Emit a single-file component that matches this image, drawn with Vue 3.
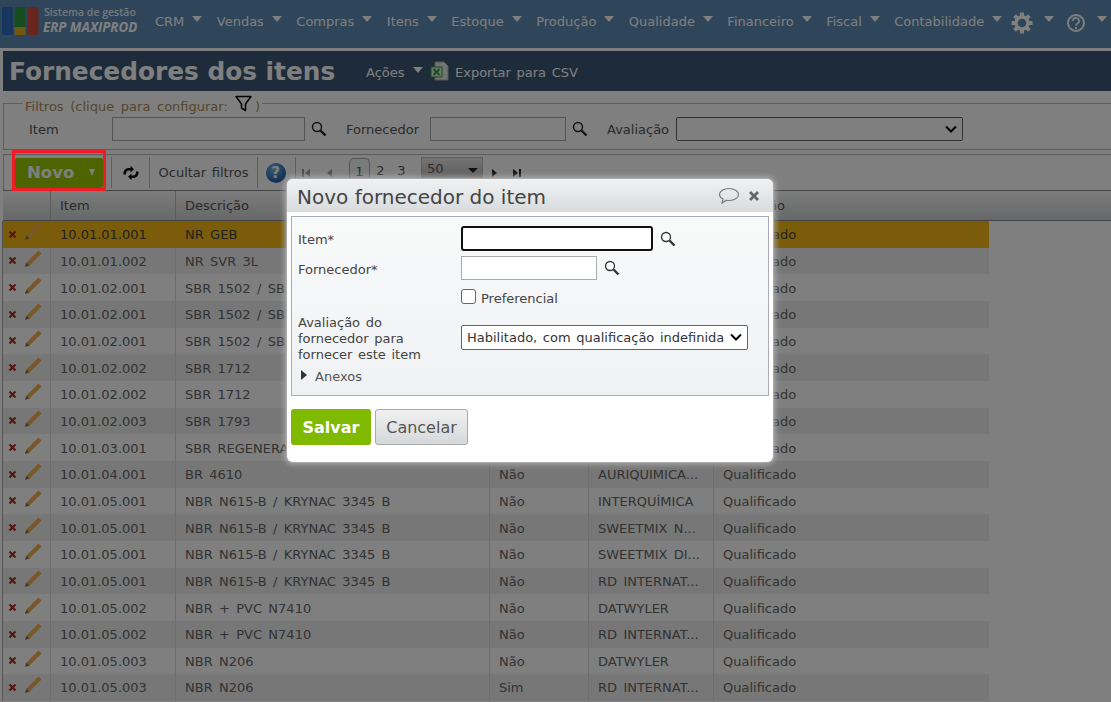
<script setup>
const navItems = ['CRM', 'Vendas', 'Compras', 'Itens', 'Estoque', 'Produção', 'Qualidade', 'Financeiro', 'Fiscal', 'Contabilidade']
const gearAngles = [0, 45, 90, 135, 180, 225, 270, 315]
const rows = [
  ['10.01.01.001', 'NR GEB', 'Não', 'AURIQUIMICA...'],
  ['10.01.01.002', 'NR SVR 3L', 'Não', 'AURIQUIMICA...'],
  ['10.01.02.001', 'SBR 1502 / SBR 1712', 'Não', 'DATWYLER'],
  ['10.01.02.001', 'SBR 1502 / SBR 1712', 'Não', 'INTERQUÍMICA'],
  ['10.01.02.001', 'SBR 1502 / SBR 1712', 'Não', 'RD INTERNAT...'],
  ['10.01.02.002', 'SBR 1712', 'Não', 'DATWYLER'],
  ['10.01.02.002', 'SBR 1712', 'Não', 'RD INTERNAT...'],
  ['10.01.02.003', 'SBR 1793', 'Não', 'DATWYLER'],
  ['10.01.03.001', 'SBR REGENERADO', 'Não', 'DATWYLER'],
  ['10.01.04.001', 'BR 4610', 'Não', 'AURIQUIMICA...'],
  ['10.01.05.001', 'NBR N615-B / KRYNAC 3345 B', 'Não', 'INTERQUÍMICA'],
  ['10.01.05.001', 'NBR N615-B / KRYNAC 3345 B', 'Não', 'SWEETMIX N...'],
  ['10.01.05.001', 'NBR N615-B / KRYNAC 3345 B', 'Não', 'SWEETMIX DI...'],
  ['10.01.05.001', 'NBR N615-B / KRYNAC 3345 B', 'Não', 'RD INTERNAT...'],
  ['10.01.05.002', 'NBR + PVC N7410', 'Não', 'DATWYLER'],
  ['10.01.05.002', 'NBR + PVC N7410', 'Não', 'RD INTERNAT...'],
  ['10.01.05.003', 'NBR N206', 'Não', 'DATWYLER'],
  ['10.01.05.003', 'NBR N206', 'Sim', 'RD INTERNAT...'],
]
</script>

<template>
  <div class="page">
    <header class="nav">
      <div class="logo">
        <svg width="37" height="28" viewBox="0 0 37 28">
          <rect x="0" y="0" width="11" height="28" rx="2" fill="#2f6cc0" />
          <rect x="12.500" y="0" width="11" height="20" rx="1" fill="#2f9a3c" />
          <rect x="12.500" y="20" width="11" height="8" rx="1" fill="#e0b020" />
          <rect x="25.500" y="0" width="11" height="28" rx="2" fill="#d04c3c" />
        </svg>
        <div class="logo-text">
          <span class="logo-top">Sistema de gestão</span>
          <span class="logo-bottom">ERP MAXIPROD</span>
        </div>
      </div>
      <nav class="menu">
        <span v-for="item in navItems" :key="item" class="menu-item">{{ item }}<i class="caret"></i></span>
        <span class="menu-icon">
          <svg width="22" height="22" viewBox="-11 -11 22 22">
            <circle r="6" fill="none" stroke="#fff" stroke-width="3.400" />
            <rect v-for="a in gearAngles" :key="a" x="-2" y="-10.500" width="4" height="5" fill="#fff" :transform="`rotate(${a})`" />
          </svg>
          <i class="caret"></i>
        </span>
        <span class="menu-icon">
          <svg width="20" height="20" viewBox="0 0 20 20">
            <circle cx="10" cy="10" r="8" fill="none" stroke="#fff" stroke-width="2" />
            <path d="M7 8a3 3 0 1 1 4.600 2.400c-1 .7-1.600 1.200-1.600 2.400" fill="none" stroke="#fff" stroke-width="1.800" />
            <rect x="9" y="14" width="2" height="2" fill="#fff" />
          </svg>
          <i class="caret"></i>
        </span>
      </nav>
    </header>

    <main class="content">
      <div class="title-bar">
        <h1>Fornecedores dos itens</h1>
        <span class="title-action first">Ações<i class="caret"></i></span>
        <svg class="xls" width="20" height="20" viewBox="0 0 20 20">
          <path d="M5 1h9l4 4v14H5z" fill="#e8e8e8" stroke="#aaa" />
          <rect x="1" y="6" width="11" height="10" fill="#dcebd8" stroke="#2f9a3c" />
          <path d="M3.500 8l6 6M9.500 8l-6 6" stroke="#2f9a3c" stroke-width="1.800" />
        </svg>
        <span class="title-action">Exportar para CSV</span>
      </div>

      <fieldset class="filters">
        <legend>Filtros (clique para configurar:
          <svg class="funnel" width="17" height="17" viewBox="0 0 17 17">
            <path d="M1 1.500h15L10.500 9v6.500l-4-2.500V9z" fill="none" stroke="#000" stroke-width="1.500" stroke-linejoin="round" />
          </svg>
          )</legend>
        <div class="filter-row">
          <label class="f-item">Item</label>
          <input class="f-input wide" type="text" />
          <svg class="lens" width="16" height="16" viewBox="0 0 16 16">
            <circle cx="6" cy="6" r="4.500" fill="#fff" fill-opacity=".4" stroke="#222" stroke-width="1.400" />
            <path d="M9.500 9.500l5 5" stroke="#222" stroke-width="2.400" />
          </svg>
          <label class="f-forn">Fornecedor</label>
          <input class="f-input narrow" type="text" />
          <svg class="lens" width="16" height="16" viewBox="0 0 16 16">
            <circle cx="6" cy="6" r="4.500" fill="#fff" fill-opacity=".4" stroke="#222" stroke-width="1.400" />
            <path d="M9.500 9.500l5 5" stroke="#222" stroke-width="2.400" />
          </svg>
          <label class="f-aval">Avaliação</label>
          <select class="f-select"><option></option></select>
        </div>
      </fieldset>

      <div class="toolbar">
        <div class="novo-wrap">
          <button class="novo"><span>Novo</span><i class="novo-caret"></i></button>
        </div>
        <div class="tool refresh">
          <svg width="18" height="16" viewBox="0 0 18 16">
            <path d="M1.500 9.500C1 5.500 3.500 3 7 3h1.500V.8L12 4.200 8.500 7.500V5.500H7C5 5.500 3.800 7 4 9.500z" fill="#111" />
            <path d="M16.500 6.500C17 10.500 14.500 13 11 13H9.500v2.200L6 11.800 9.500 8.500v2H11c2 0 3.200-1.500 3-4z" fill="#111" />
          </svg>
        </div>
        <div class="tool hide-filters">Ocultar filtros</div>
        <div class="tool help">
          <span class="help-ball">?</span>
        </div>
        <div class="pager">
          <svg width="10" height="10" viewBox="0 0 10 10"><path d="M1 1h2v8H1zM9 1v8L4 5z" fill="#999" /></svg>
          <svg class="prev" width="10" height="10" viewBox="0 0 10 10"><path d="M8 1v8L3 5z" fill="#999" /></svg>
          <span class="page-no current">1</span>
          <span class="page-no">2</span>
          <span class="page-no">3</span>
          <span class="per-page">50<i class="per-caret"></i></span>
          <svg class="next" width="10" height="10" viewBox="0 0 10 10"><path d="M2 1v8l5-4z" fill="#222" /></svg>
          <svg class="last" width="10" height="10" viewBox="0 0 10 10"><path d="M1 1v8l5-4zM7 1h2v8H7z" fill="#222" /></svg>
        </div>
      </div>

      <div class="grid-head">
        <div class="hcell"></div>
        <div class="hcell">Item</div>
        <div class="hcell">Descrição</div>
        <div class="hcell">Preferencial</div>
        <div class="hcell">Fornecedor</div>
        <div class="hcell last-col">Avaliação</div>
      </div>
      <div class="grid-body">
        <div v-for="(r, i) in rows" :key="i" class="row" :class="{ sel: i === 0, alt: i % 2 === 1 }">
          <div class="cell actions">
            <svg width="9" height="9" viewBox="0 0 9 9"><path d="M1.500 1.500l6 6M7.500 1.500l-6 6" stroke="#a6321c" stroke-width="2.200" /></svg>
            <svg class="pencil" width="20" height="20" viewBox="0 0 20 20">
              <path d="M15.500 1.500l3 3L6.500 16.500l-3-3z" fill="#f0b050" />
              <path d="M3.500 13.500l3 3-4.500 1.500z" fill="#8a6a40" />
            </svg>
          </div>
          <div class="cell">{{ r[0] }}</div>
          <div class="cell">{{ r[1] }}</div>
          <div class="cell">{{ r[2] }}</div>
          <div class="cell">{{ r[3] }}</div>
          <div class="cell last-col">Qualificado</div>
        </div>
      </div>
    </main>

    <div class="overlay"></div>

    <section class="modal">
      <div class="modal-head">
        <h2>Novo fornecedor do item</h2>
        <svg class="comment" width="22" height="18" viewBox="0 0 22 18">
          <path d="M11 1.500c5 0 9.500 2.500 9.500 6s-4.500 6-9 6c-1 0-2 0-3-.3L4 16l1-4C2.800 11 1.500 9.500 1.500 7.500c0-3.500 4.500-6 9.500-6z" fill="none" stroke="#777" stroke-width="1.100" />
        </svg>
        <svg class="close" width="12" height="12" viewBox="0 0 12 12"><path d="M2 2l8 8M10 2l-8 8" stroke="#666" stroke-width="2.800" /></svg>
      </div>
      <div class="modal-panel">
        <div class="form-row r1">
          <label>Item*</label>
          <input class="m-input focus" type="text" />
          <svg class="lens" width="16" height="16" viewBox="0 0 16 16">
            <circle cx="6" cy="6" r="4.500" fill="#fff" stroke="#333" stroke-width="1.300" />
            <path d="M9.500 9.500l5 5" stroke="#333" stroke-width="2.400" />
          </svg>
        </div>
        <div class="form-row r2">
          <label>Fornecedor*</label>
          <input class="m-input plain" type="text" />
          <svg class="lens" width="16" height="16" viewBox="0 0 16 16">
            <circle cx="6" cy="6" r="4.500" fill="#fff" stroke="#333" stroke-width="1.300" />
            <path d="M9.500 9.500l5 5" stroke="#333" stroke-width="2.400" />
          </svg>
        </div>
        <div class="form-row r3">
          <label></label>
          <span class="check"></span>
          <span class="check-label">Preferencial</span>
        </div>
        <div class="form-row r4">
          <label>Avaliação do fornecedor para fornecer este item</label>
          <select class="m-select"><option>Habilitado, com qualificação indefinida</option></select>
        </div>
        <div class="anexos"><i class="tri"></i>Anexos</div>
      </div>
      <div class="modal-actions">
        <button class="salvar">Salvar</button>
        <button class="cancelar">Cancelar</button>
      </div>
    </section>
  </div>
</template>

<style>
html, body { margin: 0; padding: 0; height: 100%; overflow: hidden; background: #fff; }
</style>

<style scoped>
.page {
  position: relative;
  width: 1111px;
  height: 702px;
  overflow: hidden;
  background: #fff;
  font-family: "DejaVu Sans", Verdana, sans-serif;
  font-size: 13px;
  word-spacing: 1.500px;
  color: #666;
}
.nav {
  display: flex;
  align-items: center;
  height: 48px;
  background: #5e8ab2;
  color: #fff;
}
.logo { flex: none; display: flex; align-items: center; width: 155px; padding-left: 2px; box-sizing: border-box; }
.logo svg { flex: none; margin-top: -7px; }
.logo-text { display: flex; flex-direction: column; margin-left: 5px; margin-top: -9px; font-family: "Open Sans", sans-serif; word-spacing: 0; }
.logo-top { font-size: 10.500px; font-weight: 600; line-height: 14px; color: #e8eef3; white-space: nowrap; }
.logo-bottom { font-size: 13.300px; font-weight: 700; font-style: italic; line-height: 16px; color: #fff; white-space: nowrap; margin-left: -1px; }
.menu { flex: none; display: flex; align-items: center; margin-top: -6px; }
.menu-item { display: flex; align-items: center; margin-right: 14.450px; white-space: nowrap; }
.caret {
  display: inline-block;
  width: 0;
  height: 0;
  margin-left: 8px;
  margin-top: -5px;
  border-left: 5px solid transparent;
  border-right: 5px solid transparent;
  border-top: 6px solid currentColor;
}
.menu-icon { display: flex; align-items: center; margin-right: 12px; margin-top: 3px; }
.menu-item:nth-child(10) { margin-right: 9px; }
.menu-icon .caret { margin-left: 11px; margin-top: -8px; }

.content { padding: 3px 0 0 3px; }
.title-bar {
  display: flex;
  align-items: center;
  height: 40px;
  padding-left: 6px;
  background: #3a5676;
  color: #fff;
}
.title-bar h1 { margin: 0; width: 357px; font-size: 24.800px; font-weight: 700; white-space: nowrap; word-spacing: 0; }
.title-action { display: inline-flex; align-items: center; margin-top: 2px; }
.title-action.first { width: 64px; }
.xls { flex: none; margin-right: 5px; margin-top: -1px; }

.filters {
  margin: 4px 0 0;
  padding: 0 0 8px 25px;
  height: 55px;
  box-sizing: border-box;
  border: 1px solid #bbb;
  border-right: 0;
  min-width: 0;
}
.filters legend {
  margin-left: -6px;
  padding: 0 2px;
  color: #a88d60;
  height: 16px;
  line-height: 16px;
  white-space: nowrap;
  word-spacing: 2.500px;
}
.funnel { vertical-align: -1px; margin: 0 -4px 0 1px; }
.filter-row { display: flex; align-items: center; height: 24px; margin-top: 6px; }
.filter-row label { color: #555; }
.f-item { width: 83px; }
.f-input { box-sizing: border-box; height: 24px; border: 1px solid #aaa; background: #fff; padding: 0; }
.wide { width: 193px; }
.narrow { width: 136px; }
.filter-row .lens { flex: none; margin-left: 6px; }
.f-forn { width: 84px; margin-left: 19px; }
.f-aval { width: 69px; margin-left: 19px; }
.f-select,
.m-select {
  appearance: none;
  background: #fff url("data:image/svg+xml,%3Csvg xmlns='http://www.w3.org/2000/svg' width='12' height='8' viewBox='0 0 12 8'%3E%3Cpath d='M1 1.500l5 5 5-5' fill='none' stroke='%23000' stroke-width='2'/%3E%3C/svg%3E") no-repeat right 5px center;
}
.f-select { box-sizing: border-box; width: 287px; height: 24px; border: 1px solid #666; border-radius: 2px; }

.toolbar {
  display: flex;
  align-items: center;
  box-sizing: border-box;
  height: 36px;
  margin-top: 4px;
  border-top: 1px solid #bbb;
  border-left: 1px solid #bbb;
}
.novo-wrap { position: relative; display: flex; align-items: center; box-sizing: border-box; width: 107px; height: 35px; padding-left: 11px; }
.novo-wrap::after {
  content: "";
  position: absolute;
  z-index: 20;
  left: 8px;
  top: -5px;
  width: 94px;
  height: 41px;
  box-sizing: border-box;
  border: 3px solid #ee1c25;
}
.novo {
  display: flex;
  align-items: center;
  justify-content: space-between;
  box-sizing: border-box;
  width: 88px;
  height: 30px;
  padding: 0 8px 0 12px;
  border: 0;
  border-radius: 2px;
  background: #9dc800;
  color: #fff;
  font: 700 16.500px "DejaVu Sans", sans-serif;
}
.novo-caret { width: 0; height: 0; border-left: 3.500px solid transparent; border-right: 3.500px solid transparent; border-top: 7px solid #fff; }
.tool { display: flex; align-items: center; justify-content: center; box-sizing: border-box; height: 31px; border-left: 1px solid #bbb; color: #555; }
.refresh { width: 38px; }
.hide-filters { width: 108px; white-space: nowrap; }
.help { width: 38px; padding-right: 2px; }
.help-ball {
  display: flex;
  align-items: center;
  justify-content: center;
  width: 20px;
  height: 20px;
  border-radius: 50%;
  background: radial-gradient(circle at 40% 30%, #7fb6ec, #1e5fa8 70%);
  color: #fff;
  font-weight: 700;
  font-size: 15px;
}
.pager { display: flex; align-items: center; height: 31px; border-left: 1px solid #bbb; padding-left: 5px; color: #555; }
.prev { margin-left: 13px; }
.page-no { display: block; box-sizing: border-box; width: 21px; height: 23px; margin-top: -7px; padding-top: 5px; line-height: 16px; text-align: center; }
.page-no.current { margin-left: 15px; border: 1px solid #aaa; border-bottom: 0; border-radius: 5px 5px 0 0; background: #f4f4f4; }
.per-page {
  position: relative;
  box-sizing: border-box;
  width: 62px;
  height: 22px;
  margin-left: 9px;
  margin-top: -9px;
  padding: 2px 0 0 5px;
  line-height: 17px;
  border: 1px solid #bbb;
  background: linear-gradient(#e8e8e8, #bbb);
}
.per-caret { position: absolute; right: 4px; top: 10px; border-left: 5px solid transparent; border-right: 5px solid transparent; border-top: 5px solid #222; }
.next { margin-left: 7px; }
.last { margin-left: 12px; }

.grid-head {
  display: grid;
  grid-template-columns: 48px 125px 314px 99px 125px 1fr;
  height: 31px;
  border-top: 1px solid #888;
  border-bottom: 1px solid #888;
  box-sizing: border-box;
  background: linear-gradient(#fafafa, #cdcfd1);
}
.hcell { display: flex; align-items: center; padding-left: 9px; border-right: 1px solid #bbb; color: #555; }
.hcell:first-child { padding: 0; }
.hcell.last-col { border-right: 0; }
.grid-body { width: 986px; border-left: 1px solid #aaa; margin-left: -1px; word-spacing: 2.200px; }
.row {
  display: grid;
  grid-template-columns: 48px 125px 314px 99px 125px 275px;
  height: 26.670px;
  background: #fff;
}
.row.alt { background: #eee; }
.row.sel { background: #f5b814; color: #444; }
.cell { display: flex; align-items: center; box-sizing: border-box; padding: 1px 0 0 9px; border-right: 1px solid #ddd; white-space: nowrap; overflow: hidden; }
.row.sel .cell { border-right-color: #f5b814; }
.cell.last-col { border-right: 0; }
.cell.actions { padding: 0 0 0 5px; }
.pencil { flex: none; margin-left: 6px; margin-top: -4px; }

.overlay { position: absolute; inset: 0; z-index: 10; background: rgba(0, 0, 0, .5); }

.modal {
  position: absolute;
  z-index: 11;
  left: 287px;
  top: 179px;
  width: 486px;
  height: 283px;
  box-sizing: border-box;
  border-radius: 6px;
  background: #fff;
  box-shadow: 0 0 0 1px #aaa, 0 0 5px 3px rgba(180, 180, 180, .7);
  font-size: 13px;
  color: #444;
}
.modal-head {
  display: flex;
  align-items: center;
  height: 33px;
  padding-left: 10px;
  border-radius: 6px 6px 0 0;
  background: linear-gradient(#f0f1f2, #d8dcdf);
}
.modal-head h2 { flex: 1; margin: 2px 0 0; font-size: 20px; font-weight: 400; color: #444; white-space: nowrap; word-spacing: 0; }
.close { margin: 0 13px 0 8px; }
.modal-panel {
  box-sizing: border-box;
  height: 180px;
  margin: 4px 4px 0;
  padding: 9px 0 0 6px;
  border: 1px solid #aab;
  background: linear-gradient(#f8fafa, #f0f1f3);
}
.form-row { display: flex; align-items: center; }
.form-row label { flex: none; width: 163px; }
.r1 label, .r2 label { padding-top: 2px; }
.r1 { height: 25px; }
.r2 { height: 24px; margin-top: 5px; }
.r3 { height: 15px; margin-top: 9px; }
.r4 { height: 48px; margin-top: 11px; }
.m-input { box-sizing: border-box; background: #fff; padding: 0; }
.focus { width: 192px; height: 25px; border: 2px solid #111; border-radius: 3px; }
.plain { width: 136px; height: 24px; border: 1px solid #aaa; }
.form-row .lens { flex: none; margin-left: 7px; }
.check { box-sizing: border-box; width: 15px; height: 15px; border: 1px solid #666; border-radius: 3px; background: #fff; }
.check-label { margin: 3px 0 0 5px; }
.r4 label { line-height: 16px; width: 163px; padding-right: 20px; box-sizing: border-box; }
.m-select {
  box-sizing: border-box;
  width: 287px;
  height: 25px;
  margin-top: -4px;
  padding-left: 5px;
  border: 1px solid #666;
  border-radius: 2px;
  color: #333;
  font: 13px "DejaVu Sans", sans-serif;
  word-spacing: 1.500px;
}
.anexos { display: flex; align-items: center; margin: 4px 0 0 3px; height: 18px; color: #555; }
.tri { width: 0; height: 0; margin-right: 8px; margin-top: -2px; border-top: 5px solid transparent; border-bottom: 5px solid transparent; border-left: 6px solid #333; }
.modal-actions { display: flex; gap: 4px; margin: 13px 4px 0; }
.salvar {
  box-sizing: border-box;
  width: 80px;
  height: 36px;
  border: 0;
  border-radius: 3px;
  background: #7fba00;
  color: #fff;
  font: 700 16px "DejaVu Sans", sans-serif;
}
.cancelar {
  box-sizing: border-box;
  width: 93px;
  height: 36px;
  border: 1px solid #aaa;
  border-radius: 3px;
  background: linear-gradient(#f0f0f0, #d5d8da);
  color: #555;
  font: 16px "DejaVu Sans", sans-serif;
}
</style>
